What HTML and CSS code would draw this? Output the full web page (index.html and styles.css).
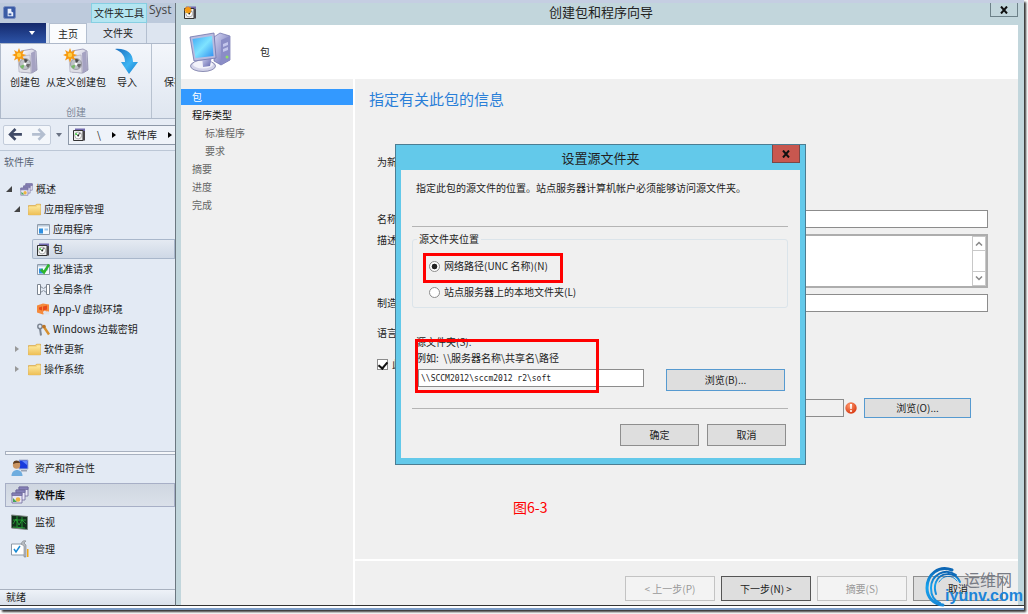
FILE: index.html
```html
<!DOCTYPE html>
<html lang="zh-CN">
<head>
  <meta charset="UTF-8" />
  <meta name="viewport" content="width=device-width, initial-scale=1.0"/>
  <title>创建包和程序向导</title>
  <link rel="stylesheet" href="styles.css">
</head>
<body>
  <!-- shared icons -->
  <svg class="defs" aria-hidden="true">
    <defs>
      <linearGradient id="gBox" x1="0" y1="0" x2="1" y2="1"><stop offset="0" stop-color="#fff"/><stop offset="1" stop-color="#a9a6c4"/></linearGradient>
      <linearGradient id="gScreen" x1="0" y1="0" x2="1" y2="1"><stop offset="0" stop-color="#3fa9f5"/><stop offset="0.5" stop-color="#7fe3ff"/><stop offset="1" stop-color="#2d8cf0"/></linearGradient>
      <linearGradient id="gArrow" x1="0" y1="0" x2="1" y2="1"><stop offset="0" stop-color="#1a6fc0"/><stop offset="0.6" stop-color="#3db4f2"/><stop offset="1" stop-color="#1679cc"/></linearGradient>
      <linearGradient id="gCase" x1="0" y1="0" x2="1" y2="1"><stop offset="0" stop-color="#d5d7f3"/><stop offset="1" stop-color="#6164ac"/></linearGradient>
      <linearGradient id="gFolder" x1="0" y1="0" x2="0" y2="1"><stop offset="0" stop-color="#fdeaa0"/><stop offset="1" stop-color="#edbe55"/></linearGradient>
      <radialGradient id="gErr" cx="0.4" cy="0.3" r="0.8"><stop offset="0" stop-color="#ff9b70"/><stop offset="1" stop-color="#d42c05"/></radialGradient>
      <linearGradient id="gSwirl" x1="0" y1="0" x2="0" y2="1"><stop offset="0" stop-color="#0d66b4"/><stop offset="0.5" stop-color="#16a2ee"/><stop offset="1" stop-color="#1788d6"/></linearGradient>
    </defs>
    <symbol id="newpkg" viewBox="0 0 26 26">
      <path d="M9 3l11-2 4 2 1 19-5 3-11-1z" fill="url(#gBox)" stroke="#8d8bab" stroke-width="0.8"/>
      <path d="M19 5l4-2 1 19-4 3z" fill="#a5a2c2"/>
      <path d="M6 9l12-2 1 18-12-1z" fill="#dedee6" stroke="#aaa8b8" stroke-width="0.6"/>
      <circle cx="13" cy="16" r="5.5" fill="#bfc2c8" stroke="#87868f" stroke-width="0.7"/>
      <path d="M13 16l-1-5a5 5 0 0 1 4 1z" fill="#4c4b4c"/><path d="M13 16l3 4a5 5 0 0 0 2-4z" fill="#6c6b6f"/><path d="M13 16l-5 2a5 5 0 0 0 3 3z" fill="#79b96b"/>
      <circle cx="13" cy="16" r="1.5" fill="#fff"/>
      <path d="M7 0l1.5 4 3.500-2-1.500 4 4 1-4 1.500 2 3.500-4-1.500L7 14.500 5.500 10.500 2 12.500l1.500-4L0 7l3.500-1.500L2 2l3.500 2z" fill="#f79a12"/>
      <circle cx="7" cy="7" r="2.200" fill="#ffcf45"/>
    </symbol>
    <symbol id="pkg" viewBox="0 0 13 13">
      <path d="M2 0.500h10v3H2z" fill="#7169ad"/><path d="M0.500 2.500h9.500v10H0.500z" fill="#eee" stroke="#333" stroke-width="1"/>
      <path d="M10 3h2v9.500h-2z" fill="#49464a"/><circle cx="5.200" cy="7.500" r="3.400" fill="#fff" stroke="#999" stroke-width="0.800"/>
      <path d="M5 7.500l-3-1 1-2z" fill="#3c3"/><path d="M5 7.500l1-3 2 1z" fill="#777"/><circle cx="5.200" cy="7.500" r="1" fill="#222"/>
    </symbol>
    <symbol id="folder" viewBox="0 0 13 12">
      <path d="M0.500 2h7l1-1.500h4V11.500H0.500z" fill="#f6d67c" stroke="#d6a548" stroke-width="0.700"/>
      <path d="M0.500 3.500h8l1-1.500h3v9.500H0.500z" fill="url(#gFolder)"/>
    </symbol>
    <symbol id="stack" viewBox="0 0 18 18">
      <g stroke="#6f6a9c" stroke-width="0.800" fill="#e9e7f7">
        <path d="M8 1h9v9H8z"/><path d="M8 1h9v2.500H8z" fill="#8580b8"/>
        <path d="M5 4h9v10H5z"/><path d="M5 4h9v2.500H5z" fill="#8580b8"/>
        <path d="M1 7h10v10H1z"/><path d="M1 7h10v2.500H1z" fill="#8580b8"/>
      </g>
      <circle cx="7" cy="13.500" r="2.300" fill="#edb544"/><path d="M2 16v-4l4 4z" fill="#45a455"/>
    </symbol>
    <symbol id="app" viewBox="0 0 13 12">
      <path d="M0.500 1h12v10H0.500z" fill="#f5f9fd" stroke="#8f9cab"/><path d="M1 1.500h11v1.500H1z" fill="#bac9da"/>
      <path d="M2 5h4v5H2z" fill="#2f8fe0"/><path d="M7.500 5h3.500v2H7.500z" fill="#9cc7ee"/>
    </symbol>
  </svg>

  <div class="frame">
    <div class="console">
      <div class="console-title">
        <svg class="sys" viewBox="0 0 14 14"><rect x="0.500" y="0.500" width="13" height="13" rx="2" fill="#3a5ba5" stroke="#7e91c2"/><path d="M5 3h4v3l2 1v4H5z" fill="#e8eefb"/><path d="M6 8h3v2H6z" fill="#3a5ba5"/></svg>
        <span class="tools">文件夹工具</span>
        <span class="app-name">Syst</span>
      </div>
      <div class="tabs">
        <button class="file-tab" aria-label="文件"><svg viewBox="0 0 6 4"><path d="M0 0h6L3 4z" fill="#fff"/></svg></button>
        <button class="tab active">主页</button>
        <button class="tab">文件夹</button>
      </div>
      <div class="ribbon">
        <div class="group">
          <div class="group-items">
            <button class="big"><svg viewBox="0 0 26 26"><use href="#newpkg"/></svg>创建包</button>
            <button class="big"><svg viewBox="0 0 26 26"><use href="#newpkg"/></svg>从定义创建包</button>
            <button class="big import"><svg viewBox="0 0 26 26"><path d="M1 1c11-1 18 4 18 13h5l-9 12-8-12h4C11 8 8 4 1 1z" fill="url(#gArrow)"/></svg>导入</button>
          </div>
          <div class="group-name">创建</div>
        </div>
        <div class="group">
          <div class="group-items"><button class="big"><svg viewBox="0 0 26 26"></svg>保存</button></div>
        </div>
      </div>
      <div class="address">
        <div class="arrows">
          <button aria-label="后退"><svg viewBox="0 0 14 12"><path d="M13 6H3M7 1L2 6l5 5" fill="none" stroke="#3f4a66" stroke-width="2.500"/></svg></button>
          <button aria-label="前进"><svg viewBox="0 0 14 12"><path d="M1 6h10M7 1l5 5-5 5" fill="none" stroke="#b4bfd0" stroke-width="2.500"/></svg></button>
        </div>
        <svg class="drop" viewBox="0 0 6 4"><path d="M0 0h6L3 4z" fill="#6a7283"/></svg>
        <div class="path">
          <svg class="ico" viewBox="0 0 13 13"><use href="#pkg"/></svg>
          <span>\</span><svg class="sep" viewBox="0 0 4 6"><path d="M0 0l4 3-4 3z"/></svg>
          <span>软件库</span><svg class="sep" viewBox="0 0 4 6"><path d="M0 0l4 3-4 3z"/></svg>
        </div>
      </div>
      <div class="pane-name">软件库</div>
      <ul class="tree">
        <li class="l1"><svg class="tw" viewBox="0 0 6 6"><path d="M6 0v6H0z" fill="#444"/></svg><svg class="ico" viewBox="0 0 18 18"><use href="#stack"/></svg>概述</li>
        <li class="l2"><svg class="tw" viewBox="0 0 6 6"><path d="M6 0v6H0z" fill="#444"/></svg><svg class="ico" viewBox="0 0 13 12"><use href="#folder"/></svg>应用程序管理</li>
        <li class="l3"><svg class="ico" viewBox="0 0 13 12"><use href="#app"/></svg>应用程序</li>
        <li class="l3 selected"><svg class="ico" viewBox="0 0 13 13"><use href="#pkg"/></svg>包</li>
        <li class="l3"><svg class="ico" viewBox="0 0 13 12"><use href="#app"/><path d="M4 6l3 3 5-8" fill="none" stroke="#2db52b" stroke-width="2.500"/></svg>批准请求</li>
        <li class="l3"><svg class="ico" viewBox="0 0 13 12"><path d="M0.500 1h3v10h-3zM9.500 1h3v10h-3z" fill="#fff" stroke="#7c8590"/><path d="M4 3l2 2M9 3L7 5M4 9l2-2M9 9L7 7" stroke="#606a78"/></svg>全局条件</li>
        <li class="l3"><svg class="ico" viewBox="0 0 13 12"><path d="M0 2l6-2 6 1v7l-6 3-6-2z" fill="#f58a3c"/><path d="M2 4l3-1v4l-3-1zM6 3l4-1v4l-4 1z" fill="#e8481a"/><path d="M6 9c0-2 3-2 3-1 2-1 4 0 3 3H7z" fill="#dde3ee"/></svg>App-V 虚拟环境</li>
        <li class="l3"><svg class="ico" viewBox="0 0 13 12"><circle cx="3" cy="3" r="2.200" fill="none" stroke="#7e8794" stroke-width="1.500"/><path d="M3 5l1 7" stroke="#7e8794" stroke-width="2"/><path d="M6 2l6 9" stroke="#d78f2c" stroke-width="2.400"/><circle cx="7" cy="3" r="1.800" fill="#b9742a"/></svg>Windows 边载密钥</li>
        <li class="l2"><svg class="tw" viewBox="0 0 6 6"><path d="M1 0l4 3-4 3z" fill="#999"/></svg><svg class="ico" viewBox="0 0 13 12"><use href="#folder"/></svg>软件更新</li>
        <li class="l2"><svg class="tw" viewBox="0 0 6 6"><path d="M1 0l4 3-4 3z" fill="#999"/></svg><svg class="ico" viewBox="0 0 13 12"><use href="#folder"/></svg>操作系统</li>
      </ul>
      <div class="splitter"></div>
      <nav class="areas">
        <a href="#"><svg viewBox="0 0 18 18"><path d="M8 1h9v9H8z" fill="#1739dc" stroke="#a8b3cf"/><path d="M11 2h5v4z" fill="#5f85ff"/><path d="M10 11h6v1.500h-6z" fill="#9aa3b3"/><circle cx="5.500" cy="6" r="3.700" fill="#c99462"/><path d="M2 5c0-5 7-4 7-1L5 4z" fill="#5e3c20"/><path d="M0.500 17c0-8 11-8 11 0z" fill="#6eaddf"/></svg>资产和符合性</a>
        <a href="#" class="selected"><svg viewBox="0 0 18 18"><use href="#stack"/></svg>软件库</a>
        <a href="#"><svg viewBox="0 0 18 18"><path d="M0.500 2l16 1.500v13L0.500 15z" fill="#11301a" stroke="#7c8580"/><path d="M2 11l3-5 3 6 3-5 4 4M2 7h13M2 14l12 1M6 3v11M11 4v11" fill="none" stroke="#2cae3b" stroke-width="0.800"/></svg>监视</a>
        <a href="#"><svg viewBox="0 0 18 18"><path d="M0.500 4h13v11H0.500z" fill="#fff" stroke="#8c98a6"/><path d="M3 9l2 3 4-6" fill="none" stroke="#168ad4" stroke-width="1.500"/><path d="M10 4c1-3 3-4 5-3l-2 2 2 2v12h-2V6z" fill="#b5bac0" stroke="#7f858c" stroke-width="0.600"/><path d="M16 9h1.500v8H16z" fill="#f3a712"/></svg>管理</a>
      </nav>
      <div class="status">就绪</div>
    </div>

    <div class="wizard">
      <div class="wizard-title">
        <svg class="ico" viewBox="0 0 13 13"><use href="#pkg"/><path d="M4 0l1 1.500L7 1 6.500 3 8 4 6.500 5 7 7 5 6.500 4 8 3 6.500 1 7l0.500-2L0 4l1.500-1L1 1l2 0.500z" fill="#f79a12"/></svg>
        <span>创建包和程序向导</span>
        <button class="close" aria-label="关闭"><svg viewBox="0 0 8 8"><path d="M1 0.500l6 7M7 0.500l-6 7" stroke="#111" stroke-width="2"/></svg></button>
      </div>
      <div class="wizard-main">
        <div class="wizard-head">
          <svg viewBox="0 0 42 40">
            <path d="M25 5l6-4 10 3v24l-9 5-7-4z" fill="url(#gCase)" stroke="#6c6fa9" stroke-width="0.700"/>
            <path d="M32 8l9-4v24l-9 5z" fill="#8a8dc6"/><path d="M34 12l5-2v3l-5 2zM34 17l5-2v3l-5 2z" fill="#c3c6ec"/>
            <circle cx="38" cy="25" r="1.500" fill="#8fe06a"/>
            <ellipse cx="14" cy="34" rx="12.500" ry="5.500" fill="#d3d3e9" stroke="#7476a3" stroke-width="0.800"/>
            <ellipse cx="14" cy="32.500" rx="10" ry="4" fill="#f2f2fa"/>
            <path d="M13 24h10l-2 10-7 1z" fill="url(#gCase)"/>
            <path d="M1 5l24-4 2 25-22 3z" fill="#b9bce0" stroke="#7073ab" stroke-width="0.800"/>
            <path d="M3.500 7l19.500-3 1.500 20L6.500 26z" fill="url(#gScreen)"/>
          </svg>
          <span>包</span>
        </div>
        <div class="wizard-body">
          <ul class="steps">
            <li class="current">包</li>
            <li class="next">程序类型</li>
            <li class="sub">标准程序</li>
            <li class="sub">要求</li>
            <li>摘要</li>
            <li>进度</li>
            <li>完成</li>
          </ul>
          <div class="page">
            <h1>指定有关此包的信息</h1>
            <div class="form">
              <p class="intro">为新</p>
              <label for="name">名称</label>
              <input type="text" id="name">
              <label for="desc">描述</label>
              <div class="memo">
                <textarea id="desc"></textarea>
                <div class="bar">
                  <button aria-label="向上"><svg viewBox="0 0 8 5"><path d="M1 4.500l3-3 3 3" fill="none" stroke="#888" stroke-width="1.500"/></svg></button>
                  <button aria-label="向下"><svg viewBox="0 0 8 5"><path d="M1 0.500l3 3 3-3" fill="none" stroke="#888" stroke-width="1.500"/></svg></button>
                </div>
              </div>
              <label for="maker">制造</label>
              <input type="text" id="maker">
              <label for="lang">语言</label>
              <input type="text" id="lang" class="short">
            </div>
            <label class="has-source"><input type="checkbox" checked>此</label>
            <div class="source">
              <input type="text" aria-label="源文件夹" readonly>
              <svg viewBox="0 0 12 12"><circle cx="6" cy="6" r="5.700" fill="url(#gErr)"/><path d="M5 2h2l-0.300 5H5.300z" fill="#fff"/><circle cx="6" cy="9" r="1.100" fill="#fff"/></svg>
              <button class="btn focus">浏览(O)...</button>
            </div>
            <p class="caption">图6-3</p>
            <div class="wizard-buttons">
              <button class="btn" disabled>&lt; 上一步(P)</button>
              <button class="btn default">下一步(N) &gt;</button>
              <button class="btn" disabled>摘要(S)</button>
              <button class="btn">取消</button>
            </div>
          </div>
        </div>
      </div>

      <div class="dialog" role="dialog" aria-labelledby="dlg-title">
        <div class="dialog-title">
          <span id="dlg-title">设置源文件夹</span>
          <button class="close" aria-label="关闭"><svg viewBox="0 0 8 8"><path d="M1 0.500l6 7M7 0.500l-6 7" stroke="#111" stroke-width="2"/></svg></button>
        </div>
        <div class="dialog-body">
          <p>指定此包的源文件的位置。站点服务器计算机帐户必须能够访问源文件夹。</p>
          <hr>
          <fieldset>
            <legend>源文件夹位置</legend>
            <label><input type="radio" name="loc" checked>网络路径(UNC 名称)(N)</label>
            <label><input type="radio" name="loc">站点服务器上的本地文件夹(L)</label>
          </fieldset>
          <label class="src-label" for="src">源文件夹(S):</label>
          <div class="hint">例如:&nbsp; \\服务器名称\共享名\路径</div>
          <div class="src-row">
            <input type="text" id="src" value="\\SCCM2012\sccm2012 r2\soft">
            <button class="btn focus">浏览(B)...</button>
          </div>
          <hr>
          <div class="dialog-buttons">
            <button class="btn">确定</button>
            <button class="btn">取消</button>
          </div>
        </div>
        <div class="mark mark-radio"></div>
        <div class="mark mark-path"></div>
      </div>

      <div class="watermark">
        <svg viewBox="0 0 38 40">
          <g fill="none" stroke="url(#gSwirl)" stroke-linecap="round">
            <path d="M27 3C14-2 2 7 2 21c0 10 7 16 16 17" stroke-width="3"/>
            <path d="M31 8C20 0 6 8 6 21c0 8 4 13 9 15" stroke-width="2"/>
            <path d="M35 15C30 4 15 5 11 15c-2 5-1 9 0 12" stroke-width="2"/>
            <path d="M32 14C27 7 18 8 14 15" stroke-width="1"/>
          </g>
        </svg>
        <div class="brand"><span>运维网</span><b>iyunv.com</b></div>
      </div>
    </div>
  </div>
</body>
</html>
```
FILE: styles.css
```css
* {
  box-sizing: border-box;
}
body {
  margin: 0;
  min-height: 100vh;
  display: flex;
  background: #fff;
  color: #222;
  font: 10px/12px "Noto Sans CJK SC", sans-serif;
}
button, input, textarea {
  font: inherit;
  color: inherit;
  margin: 0;
  padding: 0;
}
button {
  background: none;
  border: none;
}
input[type="text"], textarea {
  background: #fff;
  border: 1px solid #8c8c8c;
  border-radius: 0;
  outline: none;
}
ul, p, h1 {
  margin: 0;
  padding: 0;
  list-style: none;
}
svg {
  display: block;
  flex: none;
}
.defs {
  position: absolute;
  width: 0;
  height: 0;
}
.frame {
  flex: 1;
  min-width: 0;
  display: flex;
  margin: 0 4px 4px 0;
  border-top: 3px solid #c5cee2;
  border-bottom: 2px solid #7c9cc6;
  background: #fff;
  padding-bottom: 2px;
  box-shadow: 2px 2px 2px #333;
}

/* console behind the wizard */
.console {
  width: 176px;
  flex: none;
  overflow: hidden;
  display: flex;
  flex-direction: column;
  background: #e3eaf4;
  border-right: 1px solid #6b7780;
  border-bottom: 1px solid #333;
  white-space: nowrap;
}
.console-title {
  height: 20px;
  display: flex;
  background: #bdcadc;
}
.console-title .sys {
  width: 13px;
  height: 13px;
  margin: 3px 75px 0 3px;
}
.tools {
  flex: none;
  width: 56px;
  text-align: center;
  line-height: 18px;
  background: #b4e5f1;
  border: 1px solid #86cfe2;
}
.app-name {
  margin-left: 2px;
  font: 12px/14px "Open Sans", sans-serif;
  color: #444;
}
.tabs {
  height: 20px;
  display: flex;
  background: #dde5f0;
}
.file-tab {
  width: 46px;
  background: linear-gradient(#14286b, #2d54a7);
}
.file-tab svg {
  width: 6px;
  height: 4px;
  margin-left: 29px;
}
.tab {
  width: 57px;
  border-right: 1px solid #b3bfd0;
}
.tab.active {
  width: 38px;
  margin: 0 3px;
  background: #fafcfe;
  border: 1px solid #b3bfd0;
  border-bottom: none;
}
.ribbon {
  height: 76px;
  display: flex;
  background: linear-gradient(#f3f6fb, #dfe6f0);
  border: 1px solid #aeb9ca;
  border-right: none;
}
.group {
  flex: none;
  width: 151px;
  display: flex;
  flex-direction: column;
  justify-content: space-between;
  border-right: 1px solid #b8c2d0;
}
.group-items {
  display: flex;
  gap: 6px;
  padding: 4px 9px 0;
}
.big {
  display: flex;
  flex-direction: column;
  align-items: center;
  gap: 2px;
}
.big svg {
  width: 26px;
  height: 26px;
}
.big.import {
  margin-left: 2px;
}
.group-name {
  text-align: center;
  color: #7d8899;
}
.address {
  height: 32px;
  display: flex;
  align-items: center;
  background: #e6ecf5;
  border-bottom: 1px solid #bcc7d6;
}
.arrows {
  display: flex;
  margin-left: 3px;
  border: 1px solid #c3ccda;
  border-radius: 2px;
  background: #f4f7fb;
}
.arrows button {
  width: 23px;
  height: 18px;
  padding: 0 4px;
}
.drop {
  width: 6px;
  height: 4px;
  margin: 0 6px 0 5px;
}
.path {
  flex: 1;
  height: 20px;
  display: flex;
  align-items: center;
  gap: 11px;
  padding-left: 4px;
  border: 1px solid #8d98a8;
  border-right: none;
  background: #eff3f9;
}
.sep {
  width: 4px;
  height: 6px;
}
.ico {
  width: 13px;
  height: 13px;
}
.pane-name {
  padding: 5px 4px 6px;
  color: #5a6475;
}
.tree {
  flex: 1;
  padding-top: 5px;
}
.tree li {
  height: 20px;
  display: flex;
  align-items: center;
  gap: 3px;
}
.tw {
  width: 6px;
  height: 6px;
  margin-right: 5px;
}
.tree .l1 {
  padding-left: 6px;
}
.tree .l2 {
  padding-left: 14px;
}
.tree .l3 {
  padding-left: 5px;
  margin-left: 32px;
}
.tree .selected {
  background: linear-gradient(#e6ebf3, #cdd7e5);
  box-shadow: inset 0 0 0 1px #a9b7cb;
  border-radius: 2px 0 0 2px;
}
.splitter {
  height: 4px;
  margin-left: 5px;
  background: #f5f7fa;
  border: 1px solid #a8b1bf;
  border-right: none;
}
.areas {
  display: flex;
  flex-direction: column;
  gap: 3px;
  padding: 1px 0 28px 5px;
}
.areas a {
  height: 24px;
  display: flex;
  align-items: center;
  gap: 6px;
  padding-left: 6px;
  color: inherit;
  text-decoration: none;
}
.areas svg {
  width: 18px;
  height: 18px;
}
.areas .selected {
  font-weight: bold;
  color: #111;
  background: linear-gradient(#cfd6e0, #dbe1ea);
  box-shadow: inset 0 0 0 1px #a7afc6;
}
.status {
  height: 16px;
  padding: 1px 6px;
  background: linear-gradient(#eef2f8, #d9e0ea);
  border-top: 1px solid #a8b1bf;
}

/* wizard */
.wizard {
  position: relative;
  flex: 1;
  min-width: 0;
  display: flex;
  flex-direction: column;
  padding: 0 6px 0 5px;
  background: #c2d6dc;
  border-bottom: 1px solid #333;
}
.wizard-title {
  height: 22px;
  display: grid;
  grid-template-columns: 28px 1fr 28px;
  padding-left: 3px;
  font-size: 13px;
  line-height: 18px;
  text-align: center;
}
.wizard-title .ico {
  margin: 3px 0 0;
}
.close {
  width: 28px;
  height: 14px;
  display: grid;
  place-items: center;
  border: 1px solid #6d8189;
  border-top: none;
}
.close svg {
  width: 8px;
  height: 8px;
}
.wizard-main {
  flex: 1;
  display: flex;
  flex-direction: column;
  background: #f0f0f0;
}
.wizard-head {
  height: 54px;
  display: flex;
  align-items: center;
  gap: 29px;
  padding-left: 8px;
  background: #fff;
}
.wizard-head svg {
  width: 42px;
  height: 40px;
}
.wizard-body {
  flex: 1;
  display: flex;
}
.steps {
  flex: none;
  width: 174px;
  padding-top: 10px;
  border-right: 2px solid #fff;
  color: #666;
}
.steps li {
  padding: 2px 11px;
  margin-bottom: 2px;
}
.steps .current {
  background: #3399ff;
  color: #fff;
}
.steps .next {
  color: #111;
}
.steps .sub {
  padding-left: 24px;
}
.page {
  flex: 1;
  min-width: 0;
  display: flex;
  flex-direction: column;
}
h1 {
  margin: 11px 14px 0;
  font-size: 15px;
  line-height: 18px;
  font-weight: normal;
  color: #2a7fd8;
}
.form {
  display: grid;
  grid-template-columns: 70px 1fr;
  row-gap: 6px;
  align-items: center;
  margin: 48px 30px 0 22px;
}
.form input {
  height: 18px;
}
.form .intro {
  grid-column: 1 / 3;
  margin-bottom: 36px;
}
.form .short {
  width: 200px;
  margin-top: 6px;
}
.form label[for="desc"] {
  align-self: start;
}
.form label[for="lang"] {
  margin-top: 6px;
}
.memo {
  height: 54px;
  display: flex;
  border: 2px solid #adadad;
  background: #fff;
}
.memo textarea {
  flex: 1;
  border: none;
  resize: none;
}
.bar {
  width: 14px;
  display: flex;
  flex-direction: column;
  justify-content: space-between;
  border: 1px solid #c8c8c8;
}
.bar button {
  height: 14px;
  display: grid;
  place-items: center;
  border-bottom: 1px solid #c8c8c8;
}
.bar button + button {
  border-top: 1px solid #c8c8c8;
  border-bottom: none;
}
.bar svg {
  width: 8px;
  height: 5px;
}
.has-source {
  display: flex;
  align-items: center;
  gap: 4px;
  margin: 16px 22px 0;
}
input[type="checkbox"], input[type="radio"] {
  width: 11px;
  height: 11px;
  appearance: none;
  background: #fff;
  border: 1px solid #8c8c8c;
}
input[type="checkbox"] {
  display: grid;
  place-items: center;
}
input[type="checkbox"]:checked::before {
  content: "";
  width: 4px;
  height: 7px;
  margin-bottom: 2px;
  border: solid #111;
  border-width: 0 2px 2px 0;
  transform: rotate(40deg);
}
input[type="radio"] {
  border-radius: 50%;
}
input[type="radio"]:checked {
  background: radial-gradient(circle, #222 40%, #fff 50%);
}
.source {
  display: flex;
  align-items: center;
  margin: 28px 47px 0 110px;
}
.source input {
  flex: 1;
  height: 18px;
  background: #f0f0f0;
}
.source svg {
  width: 12px;
  height: 12px;
  margin: 0 7px 0 1px;
}
.btn {
  width: 79px;
  height: 22px;
  background: #dedede;
  border: 1px solid #8e8e8e;
}
.btn.focus {
  border-color: #569ad0;
}
.source .btn {
  width: 107px;
  height: 20px;
}
.caption {
  margin: 81px 0 0 158px;
  font-size: 14px;
  line-height: 16px;
  color: #f00;
}
.wizard-buttons {
  display: flex;
  justify-content: flex-end;
  gap: 6px;
  margin-top: auto;
  padding: 15px 15px 4px;
  border-top: 2px solid #fff;
}
.wizard-buttons .btn {
  width: 90px;
  height: 25px;
}
.btn.default {
  border-color: #555;
}
.btn:disabled {
  background: #f3f3f3;
  border-color: #c3c3c3;
  color: #999;
}

/* dialog floating over the wizard */
.dialog {
  position: absolute;
  top: 141px;
  left: 219px;
  width: 411px;
  padding: 0 5px 6px 5px;
  background: #63c9ea;
  border: 1px solid #4c7d92;
}
.dialog-title {
  height: 25px;
  display: grid;
  grid-template-columns: 1fr auto;
  font-size: 13px;
  line-height: 25px;
  text-align: center;
}
.dialog-title span {
  padding-left: 28px;
}
.dialog .close {
  height: 18px;
  background: #c8574f;
  border-color: #7b4747;
}
.dialog-body {
  padding: 12px 12px 12px 11px;
  background: #f0f0f0;
}
.dialog-body p {
  padding-left: 4px;
}
.dialog-body hr {
  height: 1px;
  margin: 32px 0 6px;
  border: none;
  background: #b4b4b4;
}
fieldset {
  margin: 0;
  padding: 14px 16px 8px;
  border: 1px solid #dbe4ea;
  border-radius: 3px;
}
legend {
  margin-left: -12px;
  padding: 0 2px;
}
fieldset label {
  height: 14px;
  display: flex;
  align-items: center;
  gap: 4px;
}
fieldset label + label {
  margin-top: 12px;
}
.src-label {
  display: block;
  margin: 28px 4px 4px;
}
.hint {
  padding-left: 4px;
}
.src-row {
  display: flex;
  justify-content: space-between;
  margin: 5px 3px 0 6px;
}
.src-row input {
  width: 226px;
  height: 18px;
  padding-left: 2px;
  font: 8px/12px "DejaVu Sans Mono", monospace;
}
.src-row .btn {
  width: 119px;
}
.dialog-body .src-row + hr {
  margin: 17px 0 15px;
}
.dialog-buttons {
  display: flex;
  justify-content: flex-end;
  gap: 8px;
  padding-right: 2px;
}
.mark {
  position: absolute;
  border: 3px solid #f00;
}
.mark-radio {
  top: 108px;
  left: 27px;
  width: 140px;
  height: 30px;
}
.mark-path {
  top: 194px;
  left: 19px;
  width: 184px;
  height: 54px;
}

.watermark {
  position: absolute;
  right: 1px;
  bottom: -2px;
  display: flex;
}
.watermark svg {
  width: 38px;
  height: 40px;
}
.brand {
  display: flex;
  flex-direction: column;
  align-items: flex-end;
  margin: 3px 0 0 -18px;
}
.brand span {
  margin-right: 11px;
  font-size: 16px;
  line-height: 18px;
  color: #777b85;
}
.brand b {
  font: bold 16px/16px "Liberation Sans", sans-serif;
  color: #1c84d8;
}
```
